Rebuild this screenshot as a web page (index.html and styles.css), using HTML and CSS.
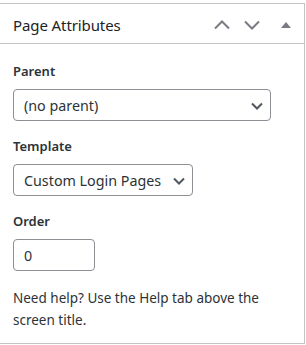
FILE: index.html
```html
<!DOCTYPE html>
<html>
<head>
<meta charset="utf-8">
<link rel="stylesheet" href="styles.css">
</head>
<body>
<div class="postbox">
  <div class="postbox-header">
    <h2 class="hndle">Page Attributes</h2>
    <div class="handle-actions">
      <button class="handle-btn up" aria-label="Move up">
        <svg width="16" height="10" viewBox="0 0 16 10"><polyline points="1,8.5 8,1.5 15,8.5" fill="none" stroke="#787c82" stroke-width="2"/></svg>
      </button>
      <button class="handle-btn down" aria-label="Move down">
        <svg width="16" height="10" viewBox="0 0 16 10"><polyline points="1,1.5 8,8.5 15,1.5" fill="none" stroke="#787c82" stroke-width="2"/></svg>
      </button>
      <button class="handle-btn toggle" aria-label="Toggle panel">
        <svg width="10" height="6" viewBox="0 0 10 6"><polygon points="5,0 10,6 0,6" fill="#787c82"/></svg>
      </button>
    </div>
  </div>
  <div class="inside">
    <p class="field-label">Parent</p>
    <div class="select-wrap parent">
      <select class="wp-select"><option>(no parent)</option></select>
      <svg class="select-arrow" width="12" height="8" viewBox="0 0 12 8"><polyline points="1,1.5 6,6.5 11,1.5" fill="none" stroke="#50575e" stroke-width="2"/></svg>
    </div>
    <p class="field-label">Template</p>
    <div class="select-wrap template">
      <select class="wp-select"><option>Custom Login Pages</option></select>
      <svg class="select-arrow" width="12" height="8" viewBox="0 0 12 8"><polyline points="1,1.5 6,6.5 11,1.5" fill="none" stroke="#50575e" stroke-width="2"/></svg>
    </div>
    <p class="field-label">Order</p>
    <input class="order-input" type="text" value="0">
    <p class="help">Need help? Use the Help tab above the screen title.</p>
  </div>
</div>
</body>
</html>
```

FILE: styles.css
```css
html, body {
  margin: 0;
  padding: 0;
  background: #fff;
}
body {
  font-family: "Noto Sans", "Open Sans", sans-serif;
  color: #1d2327;
  font-size: 13px;
}
.postbox {
  margin-top: 3px;
  margin-left: -1px;
  width: 304px;
  border: 1px solid #c3c4c7;
  background: #fff;
}
.postbox-header {
  display: flex;
  align-items: center;
  justify-content: space-between;
  height: 39px;
  border-bottom: 1px solid #c3c4c7;
  padding-left: 13px;
}
.hndle {
  margin: 0;
  padding-top: 3px;
  font-size: 15px;
  font-weight: 400;
  line-height: 20px;
  letter-spacing: -0.1px;
}
.handle-actions {
  display: flex;
  align-items: stretch;
  height: 100%;
}
.handle-btn {
  border: 0;
  background: none;
  padding: 3px 0 0;
  height: 100%;
  display: flex;
  align-items: center;
  justify-content: center;
}
.handle-btn.up { width: 28px; }
.handle-btn.down { width: 32px; }
.handle-btn.toggle { width: 36px; }
.inside {
  padding: 18px 13px 12px;
}
.field-label {
  margin: 0 0 9px;
  font-weight: 600;
  font-size: 13px;
  line-height: 18px;
  color: #2c3338;
}
.select-wrap {
  position: relative;
  margin-bottom: 16px;
}
.select-wrap.parent { width: 258px; }
.select-wrap.template { width: 180px; }
.wp-select {
  appearance: none;
  -webkit-appearance: none;
  width: 100%;
  height: 32px;
  box-sizing: border-box;
  border: 1px solid #8c8f94;
  border-radius: 4px;
  background: #fff;
  font-family: inherit;
  font-size: 14.3px;
  color: #2c3338;
  padding: 0 24px 0 10px;
  display: block;
}
.select-arrow {
  position: absolute;
  right: 8px;
  top: 13px;
  pointer-events: none;
}
.order-input {
  display: block;
  width: 82px;
  height: 32px;
  box-sizing: border-box;
  border: 1px solid #8c8f94;
  border-radius: 4px;
  font-family: inherit;
  font-size: 14.3px;
  color: #2c3338;
  padding: 0 10px;
  margin: 0 0 16px;
}
.help {
  margin: 0;
  font-size: 13.5px;
  line-height: 22px;
  color: #2c3338;
  width: 270px;
}
```
